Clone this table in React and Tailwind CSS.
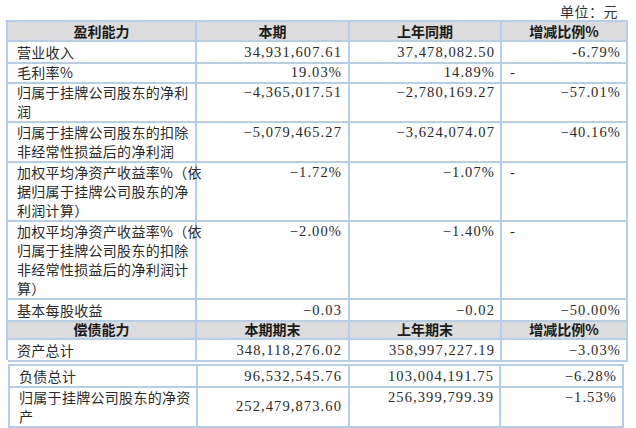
import React from 'react';

const cn = "font-['Noto_Sans_CJK_SC',sans-serif]";
const num = "font-['Liberation_Serif','Noto_Sans_CJK_SC',serif] text-[14.5px] tracking-[1.1px]";
const line = "border-r-2 border-b-2 border-[#b4cfee]";

const profitRows = [
  { h: 'h-[20px]', label: ['营业收入'], a: '34,931,607.61', b: '37,478,082.50', c: '-6.79%' },
  { h: 'h-[20px]', label: ['毛利率%'], a: '19.03%', b: '14.89%', c: '-', dash: true },
  { h: 'h-[40px]', label: ['归属于挂牌公司股东的净利', '润'], a: '−4,365,017.51', b: '−2,780,169.27', c: '−57.01%' },
  { h: 'h-[40px]', label: ['归属于挂牌公司股东的扣除', '非经常性损益后的净利润'], a: '−5,079,465.27', b: '−3,624,074.07', c: '−40.16%' },
  { h: 'h-[59px]', label: ['加权平均净资产收益率%（依', '据归属于挂牌公司股东的净', '利润计算）'], a: '−1.72%', b: '−1.07%', c: '-', dash: true },
  { h: 'h-[79px]', label: ['加权平均净资产收益率%（依', '归属于挂牌公司股东的扣除', '非经常性损益后的净利润计', '算）'], a: '−2.00%', b: '−1.40%', c: '-', dash: true },
  { h: 'h-[20px]', label: ['基本每股收益'], a: '−0.03', b: '−0.02', c: '−50.00%' },
];

const debtRows = [
  { h: 'h-[21px]', label: ['负债总计'], a: '96,532,545.76', b: '103,004,191.75', c: '−6.28%' },
  { h: 'h-[40px]', label: ['归属于挂牌公司股东的净资', '产'], a: '252,479,873.60', b: '256,399,799.39', c: '−1.53%', middle: true },
  { h: 'h-[20px]', label: [], a: '', b: '', c: '' },
];

function Label({ lines }) {
  return (
    <div className={`${cn} text-[14px] tracking-[0.3px] leading-[19px] text-[#2a2a2a] pl-[9px] pt-[1px] whitespace-nowrap`}>
      {lines.map((l, i) => (
        <div key={i}>{l}</div>
      ))}
    </div>
  );
}

function HeaderRow({ cols, titles }) {
  return (
    <div className={`grid ${cols} h-[20px] bg-[#dcdcdc]`}>
      {titles.map((t) => (
        <div
          key={t}
          className={`${line} ${cn} text-[14px] font-bold leading-[18px] text-[#1a1a1a] text-center`}
        >
          {t}
        </div>
      ))}
    </div>
  );
}

function DataRow({ row, cols }) {
  return (
    <div className={`grid ${cols} ${row.h}`}>
      <div className={line}>
        <Label lines={row.label} />
      </div>
      <div className={`${line} flex ${row.middle ? 'items-center' : 'items-start pt-[1px]'} justify-end pr-[6px]`}>
        <span className={`${num} leading-[19px] text-[#2a2a2a]`}>{row.a}</span>
      </div>
      <div className={`${line} flex items-start justify-end pr-[5px] pt-[1px]`}>
        <span className={`${num} leading-[19px] text-[#2a2a2a]`}>{row.b}</span>
      </div>
      <div className={`${line} flex items-start pt-[1px] ${row.dash ? 'justify-start pl-[8px]' : 'justify-end pr-[5px]'}`}>
        <span className={`${num} leading-[19px] text-[#2a2a2a]`}>{row.c}</span>
      </div>
    </div>
  );
}

export default function App() {
  const colsA = 'grid-cols-[189px_153px_152px_126px]';
  const colsB = 'grid-cols-[188px_152px_151px_123px]';

  return (
    <div className="w-[636px] h-[428px] overflow-hidden bg-white">
      <div className={`h-[20px] pr-[18px] pt-[2px] text-right ${cn} text-[14px] tracking-[0.5px] leading-[18px] text-[#333]`}>
        单位：元
      </div>

      {/* 盈利能力 */}
      <div className="ml-[6px] w-[622px] border-l-2 border-t-2 border-[#b4cfee]">
        <HeaderRow cols={colsA} titles={['盈利能力', '本期', '上年同期', '增减比例%']} />
        {profitRows.map((r, i) => (
          <DataRow key={i} row={r} cols={colsA} />
        ))}
        <HeaderRow cols={colsA} titles={['偿债能力', '本期期末', '上年期末', '增减比例%']} />
        <DataRow row={{ h: 'h-[20px]', label: ['资产总计'], a: '348,118,276.02', b: '358,997,227.19', c: '−3.03%' }} cols={colsA} />
      </div>

      {/* 第二段 */}
      <div className="mt-[4px] ml-[8px] w-[616px] border-l-2 border-t-2 border-[#b4cfee]">
        {debtRows.map((r, i) => (
          <DataRow key={i} row={r} cols={colsB} />
        ))}
      </div>
    </div>
  );
}
